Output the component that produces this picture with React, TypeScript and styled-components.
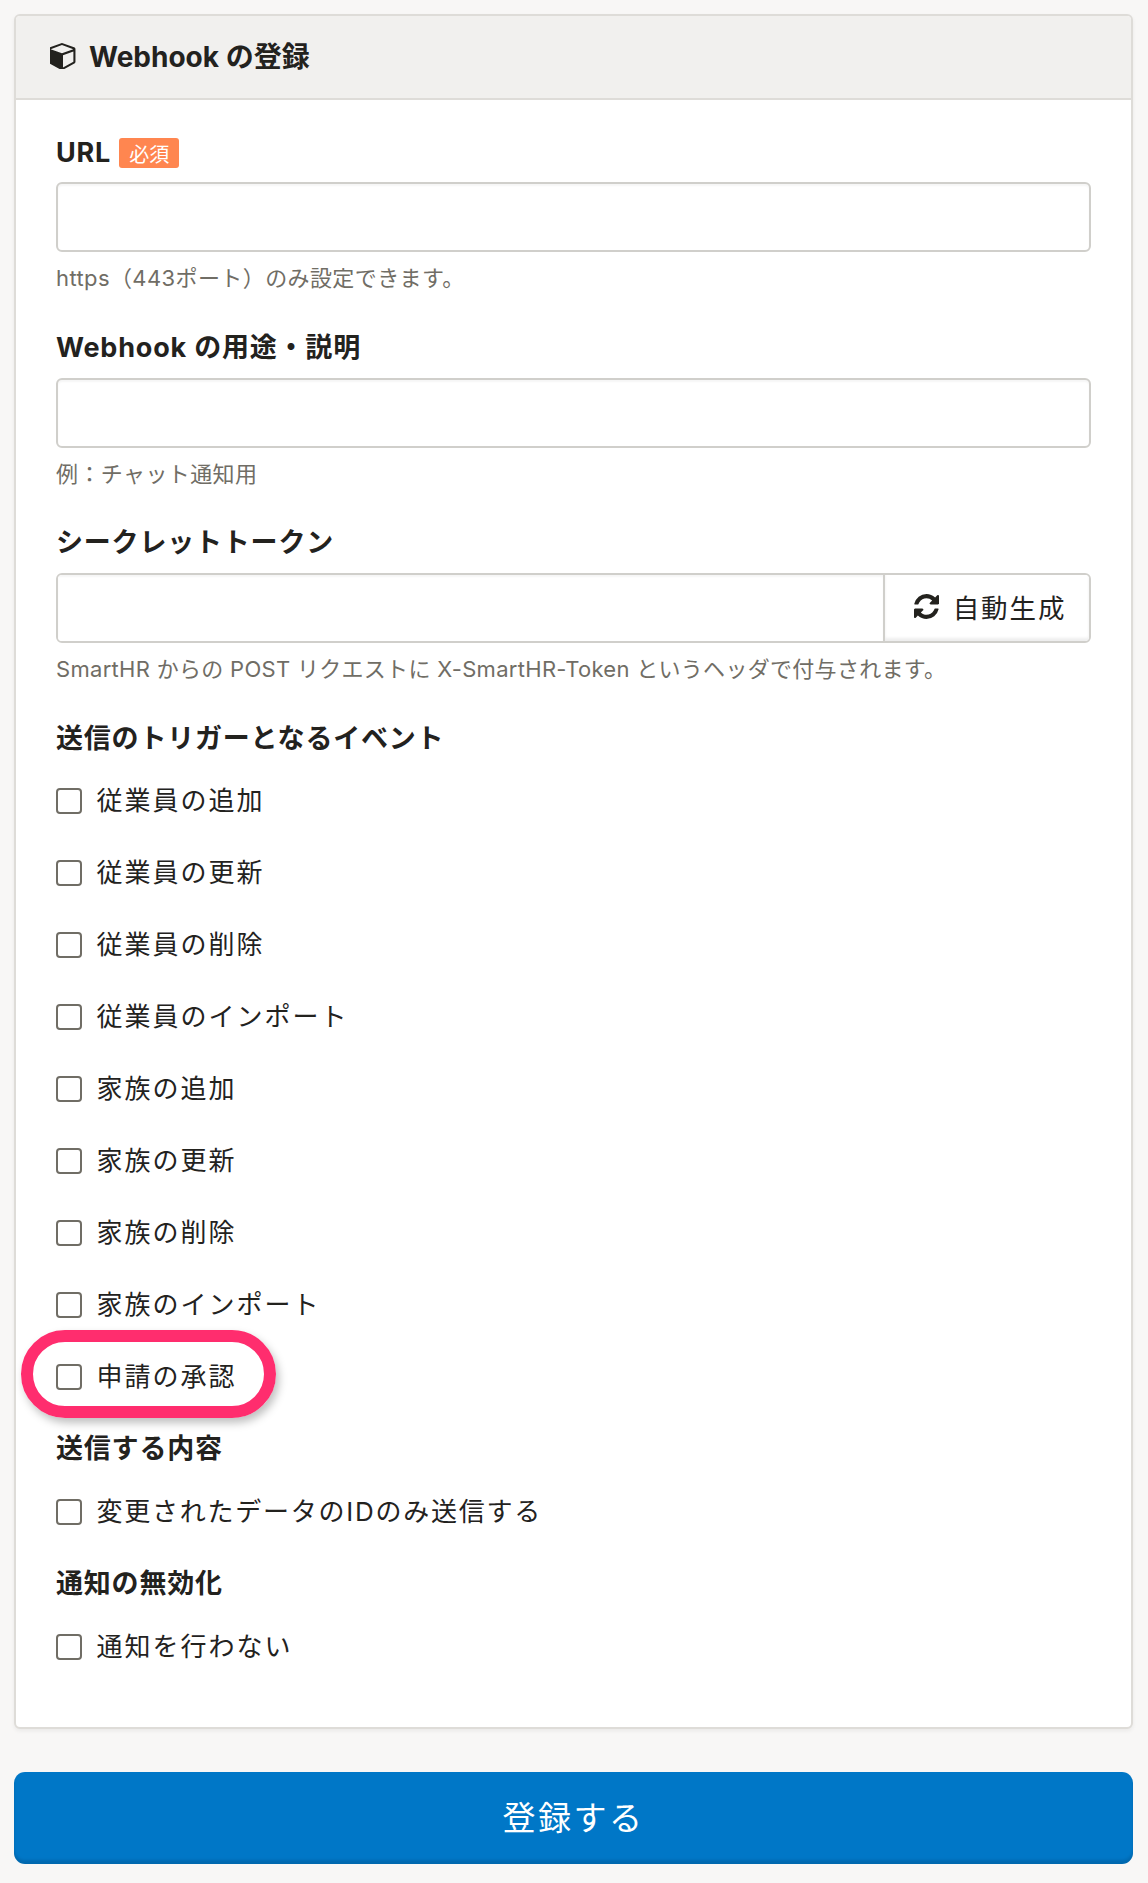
import React from "react";
import styled, { createGlobalStyle } from "styled-components";

const Global = createGlobalStyle`
  html, body { margin: 0; padding: 0; background: #f8f7f6; }
  body { font-family: Inter, "Noto Sans CJK JP", sans-serif; color: #23221e; }
`;

const Page = styled.div`
  width: 1148px;
  height: 1883px;
  box-sizing: border-box;
  padding: 14px 15px 0 14px;
`;

const Card = styled.section`
  height: 1715px;
  box-sizing: border-box;
  background: #fff;
  border: 2px solid #dedcd8;
  border-radius: 6px;
  box-shadow: 0 2px 4px rgba(0, 0, 0, 0.06);
  overflow: hidden;
`;

const CardHeader = styled.header`
  height: 84px;
  box-sizing: border-box;
  display: flex;
  align-items: center;
  gap: 13px;
  padding: 0 0 4px 34px;
  background: #f1f0ee;
  border-bottom: 2px solid #dedcd8;
  font-size: 28px;
  font-weight: 700;
`;

const CardBody = styled.div`
  padding: 34px 40px 0 40px;
`;

const Label = styled.div`
  display: flex;
  align-items: center;
  gap: 8px;
  height: 36px;
  font-size: 27px;
  font-weight: 700;
  letter-spacing: 0.8px;
`;

const Badge = styled.span`
  display: inline-flex;
  align-items: center;
  justify-content: center;
  width: 60px;
  height: 30px;
  margin-top: 2px;
  background: #ff8650;
  color: #fff;
  border-radius: 3px;
  font-size: 20px;
  font-weight: 400;
  letter-spacing: 0;
`;

const FieldBlock = styled.div<{ $after: number }>`
  margin-bottom: ${(p) => p.$after}px;
`;

const Input = styled.input<{ $top: number }>`
  display: block;
  width: 100%;
  height: 70px;
  margin-top: ${(p) => p.$top}px;
  box-sizing: border-box;
  border: 2px solid #d0cfcb;
  border-radius: 6px;
  background: #fff;
  box-shadow: inset 0 2px 2px rgba(0, 0, 0, 0.04);
  outline: none;
`;

const InputGroup = styled.div`
  display: flex;
  height: 70px;
  margin-top: 15px;
  box-sizing: border-box;
  border: 2px solid #d0cfcb;
  border-radius: 6px;
  background: #fff;
  overflow: hidden;
`;

const GroupInput = styled.input`
  flex: 1;
  min-width: 0;
  border: 0;
  outline: none;
  box-shadow: inset 0 2px 2px rgba(0, 0, 0, 0.04);
`;

const GroupButton = styled.button`
  width: 206px;
  display: flex;
  align-items: center;
  justify-content: center;
  gap: 14px;
  border: 0;
  border-left: 2px solid #d0cfcb;
  background: #fff;
  box-shadow: inset 0 -3px 3px rgba(0, 0, 0, 0.07);
  color: #23221e;
  font-family: inherit;
  font-size: 26.5px;
  letter-spacing: 1.9px;
  padding: 0 0 4px 6px;
`;

const Help = styled.p<{ $tracking: number }>`
  margin: 11px 0 0;
  font-size: 22px;
  line-height: 30px;
  color: #706d65;
  letter-spacing: ${(p) => p.$tracking}px;
`;

const Section = styled.div<{ $gap: number; $after: number }>`
  margin-top: ${(p) => p.$gap}px;
  margin-bottom: ${(p) => p.$after}px;
`;

const Row = styled.label<{ $tracking: number }>`
  position: relative;
  display: flex;
  align-items: center;
  gap: 14.5px;
  height: 72px;
  font-size: 26px;
  letter-spacing: ${(p) => p.$tracking}px;
`;

const Box = styled.span`
  width: 22px;
  height: 22px;
  margin-top: 5px;
  border: 2px solid #706d65;
  border-radius: 4px;
  background: #fff;
  flex: none;
`;

const Highlight = styled.span`
  position: absolute;
  left: -35px;
  top: -8px;
  width: 255px;
  height: 88px;
  box-sizing: border-box;
  border: 12px solid #ff2d6e;
  border-radius: 44px;
  box-shadow: 3px 5px 8px rgba(0, 0, 0, 0.25);
  pointer-events: none;
`;

const Submit = styled.button`
  display: block;
  width: 100%;
  height: 92px;
  margin-top: 43px;
  padding: 0 0 5px;
  border: 0;
  border-radius: 11px;
  background: #0077c7;
  box-shadow: inset 0 -4px 3px rgba(0, 0, 0, 0.12);
  color: #fff;
  font-family: inherit;
  font-size: 33px;
  letter-spacing: 2.5px;
`;

const CubeIcon = () => (
  <svg width={26} height={27} viewBox="128 64 1536 1664" fill="currentColor" aria-hidden="true">
    <path d="M896 1629l640-349v-636l-640 233v752zm-64-865l698-254-698-254-698 254zm832-252v768q0 35-18 65t-49 47l-704 384q-28 16-61 16t-61-16l-704-384q-31-17-49-47t-18-65v-768q0-40 23-73t61-47l704-256q22-8 44-8t44 8l704 256q38 14 61 47t23 73z" />
  </svg>
);

const RefreshIcon = () => (
  <svg width={25} height={25} viewBox="128 128 1536 1536" fill="currentColor" aria-hidden="true">
    <path d="M1639 1056q0 5-1 7-64 268-268 434.5t-478 166.5q-146 0-282.5-55t-243.5-157l-129 129q-19 19-45 19t-45-19-19-45v-448q0-26 19-45t45-19h448q26 0 45 19t19 45-19 45l-137 137q71 66 161 102t187 36q134 0 250-65t186-179q11-17 53-117 8-23 30-23h192q13 0 22.5 9.5t9.5 22.5zm25-800v448q0 26-19 45t-45 19h-448q-26 0-45-19t-19-45 19-45l138-138q-148-137-349-137-134 0-250 65t-186 179q-11 17-53 117-8 23-30 23h-199q-13 0-22.5-9.5t-9.5-22.5v-7q65-268 270-434.5t480-166.5q146 0 284 55.5t245 156.5l130-129q19-19 45-19t45 19 19 45z" />
  </svg>
);

const firstEvents = [
  "従業員の追加",
  "従業員の更新",
  "従業員の削除",
  "従業員のインポート",
  "家族の追加",
  "家族の更新",
  "家族の削除",
  "家族のインポート",
];

const CheckRow = ({ text, marked, tracking = 2 }: { text: string; marked?: boolean; tracking?: number }) => (
  <Row $tracking={tracking}>
    {marked && <Highlight />}
    <Box />
    <span>{text}</span>
  </Row>
);

export default function App() {
  return (
    <Page>
      <Global />
      <Card>
        <CardHeader>
          <CubeIcon />
          <span>Webhook の登録</span>
        </CardHeader>
        <CardBody>
          <FieldBlock $after={34}>
            <Label>
              URL<Badge>必須</Badge>
            </Label>
            <Input $top={12} />
            <Help $tracking={0.4}>https（443ポート）のみ設定できます。</Help>
          </FieldBlock>
          <FieldBlock $after={33}>
            <Label>Webhook の用途・説明</Label>
            <Input $top={15} />
            <Help $tracking={0.4}>例：チャット通知用</Help>
          </FieldBlock>
          <FieldBlock $after={34}>
            <Label>シークレットトークン</Label>
            <InputGroup>
              <GroupInput />
              <GroupButton>
                <RefreshIcon />
                <span>自動生成</span>
              </GroupButton>
            </InputGroup>
            <Help $tracking={0.3}>SmartHR からの POST リクエストに X-SmartHR-Token というヘッダで付与されます。</Help>
          </FieldBlock>
          <Label>送信のトリガーとなるイベント</Label>
          <Section $gap={8} $after={18}>
            {firstEvents.map((t) => (
              <CheckRow key={t} text={t} />
            ))}
            <CheckRow text="申請の承認" marked />
          </Section>
          <Label>送信する内容</Label>
          <Section $gap={9} $after={18}>
            <CheckRow text="変更されたデータのIDのみ送信する" tracking={1.75} />
          </Section>
          <Label>通知の無効化</Label>
          <Section $gap={9} $after={0}>
            <CheckRow text="通知を行わない" />
          </Section>
        </CardBody>
      </Card>
      <Submit>登録する</Submit>
    </Page>
  );
}
